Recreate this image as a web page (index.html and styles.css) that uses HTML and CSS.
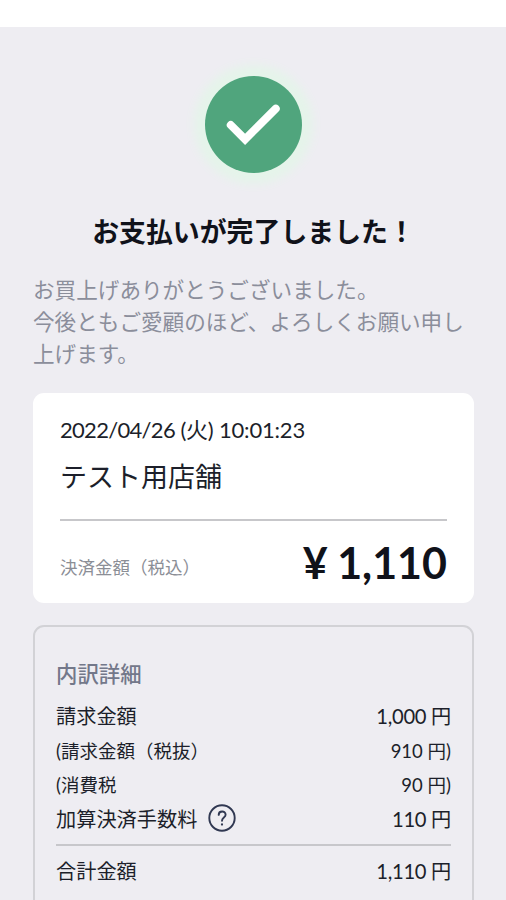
FILE: index.html
```html
<!DOCTYPE html>
<html lang="ja">
<head>
  <meta charset="UTF-8">
  <meta name="viewport" content="width=device-width, initial-scale=1.0">
  <title>お支払い完了</title>
  <link rel="stylesheet" href="styles.css">
</head>
<body>
  <main class="page">
    <div class="check">
      <svg width="97" height="97" viewBox="0 0 98 98" fill="none">
        <path d="M26 49.5 L40.5 64 L71.5 33" stroke="#fff" stroke-width="8" stroke-linecap="round"/>
      </svg>
    </div>

    <h1>お支払いが完了しました！</h1>
    <p class="message">お買上げありがとうございました。<br>今後ともご愛顧のほど、よろしくお願い申し上げます。</p>

    <section class="card">
      <p class="date"><span class="day">2022/04/26</span> (火) 10:01:23</p>
      <p class="shop">テスト用店舗</p>
      <div class="total">
        <span class="total-label">決済金額（税込）</span>
        <span class="total-price">¥ 1,110</span>
      </div>
    </section>

    <section class="detail">
      <h2>内訳詳細</h2>
      <div class="row">
        <span>請求金額</span>
        <span class="price">1,000 円</span>
      </div>
      <div class="row small">
        <span>(請求金額（税抜）</span>
        <span class="price">910 円)</span>
      </div>
      <div class="row small">
        <span>(消費税</span>
        <span class="price">90 円)</span>
      </div>
      <div class="row">
        <span>加算決済手数料</span>
        <svg class="help" width="28" height="28" viewBox="0 0 28 28" fill="none" stroke="#303852" stroke-width="1.9" stroke-linecap="round">
          <circle cx="14" cy="14" r="12.7"/>
          <path d="M10.7 10.9 C10.7 6.4 17.6 6.4 17.6 10.7 C17.6 13.6 14 13.5 14 16.7"/>
          <path d="M14 20.4 V20.6" stroke-width="2.2"/>
        </svg>
        <span class="price">110 円</span>
      </div>
      <div class="row sum">
        <span>合計金額</span>
        <span class="price">1,110 円</span>
      </div>
    </section>
  </main>
</body>
</html>
```
FILE: styles.css
```css
* {
  box-sizing: border-box;
}

body {
  margin: 0;
  background: #fff;
  color: #1c1f2a;
  font-family: Lato, "Noto Sans CJK JP", sans-serif;
}

h1, h2, p {
  margin: 0;
}

.page {
  height: 873px;
  margin-top: 27px;
  padding: 49px 32px 0 33px;
  background: #eeedf2;
  overflow: hidden;
}

.check {
  width: 97px;
  height: 97px;
  margin: 0 auto;
  border-radius: 50%;
  background: #50a57d;
  box-shadow: 0 0 10px 11px #e5f4ea;
}

.check svg {
  display: block;
}

h1 {
  margin-top: 39px;
  color: #10121a;
  font-size: 26.9px;
  font-weight: 700;
  line-height: 40px;
  text-align: center;
  white-space: nowrap;
}

.message {
  height: 97px;
  margin-top: 22px;
  color: #8b8e9b;
  font-size: 21.6px;
  line-height: 32.2px;
}

.card {
  height: 210px;
  margin-top: 22px;
  padding: 21px 27px 0;
  border-radius: 11px;
  background: #fff;
}

.date {
  font-size: 22px;
  line-height: 32px;
  letter-spacing: -0.2px;
}

.day {
  letter-spacing: -0.7px;
}

.shop {
  margin-top: 11px;
  padding-bottom: 22px;
  border-bottom: 2px solid #c7c7ca;
  font-size: 27px;
  line-height: 40px;
}

.total {
  display: flex;
  justify-content: space-between;
  align-items: center;
  height: 84px;
}

.total-label {
  padding-top: 7px;
  color: #8b8e96;
  font-size: 17.5px;
}

.total-price {
  padding-bottom: 2px;
  color: #10121a;
  font-size: 43px;
  font-weight: 700;
  word-spacing: -1px;
}

.detail {
  height: 360px;
  margin-top: 22px;
  padding: 31px 21px 0;
  border: 2px solid #d2d2d6;
  border-radius: 11px;
}

h2 {
  margin-bottom: 7px;
  color: #73788a;
  font-size: 21.4px;
  font-weight: 500;
  line-height: 32px;
}

.row {
  display: flex;
  align-items: center;
  height: 34px;
  font-size: 20.2px;
}

h2 + .row {
  height: 36px;
}

.small {
  font-size: 18.5px;
}

.help {
  margin-left: 11px;
}

.price {
  margin-left: auto;
  letter-spacing: -0.3px;
}

.small .price {
  letter-spacing: 0;
}

.sum {
  height: 50px;
  margin-top: 9px;
  border-top: 2px solid #c7c7cb;
}
```
